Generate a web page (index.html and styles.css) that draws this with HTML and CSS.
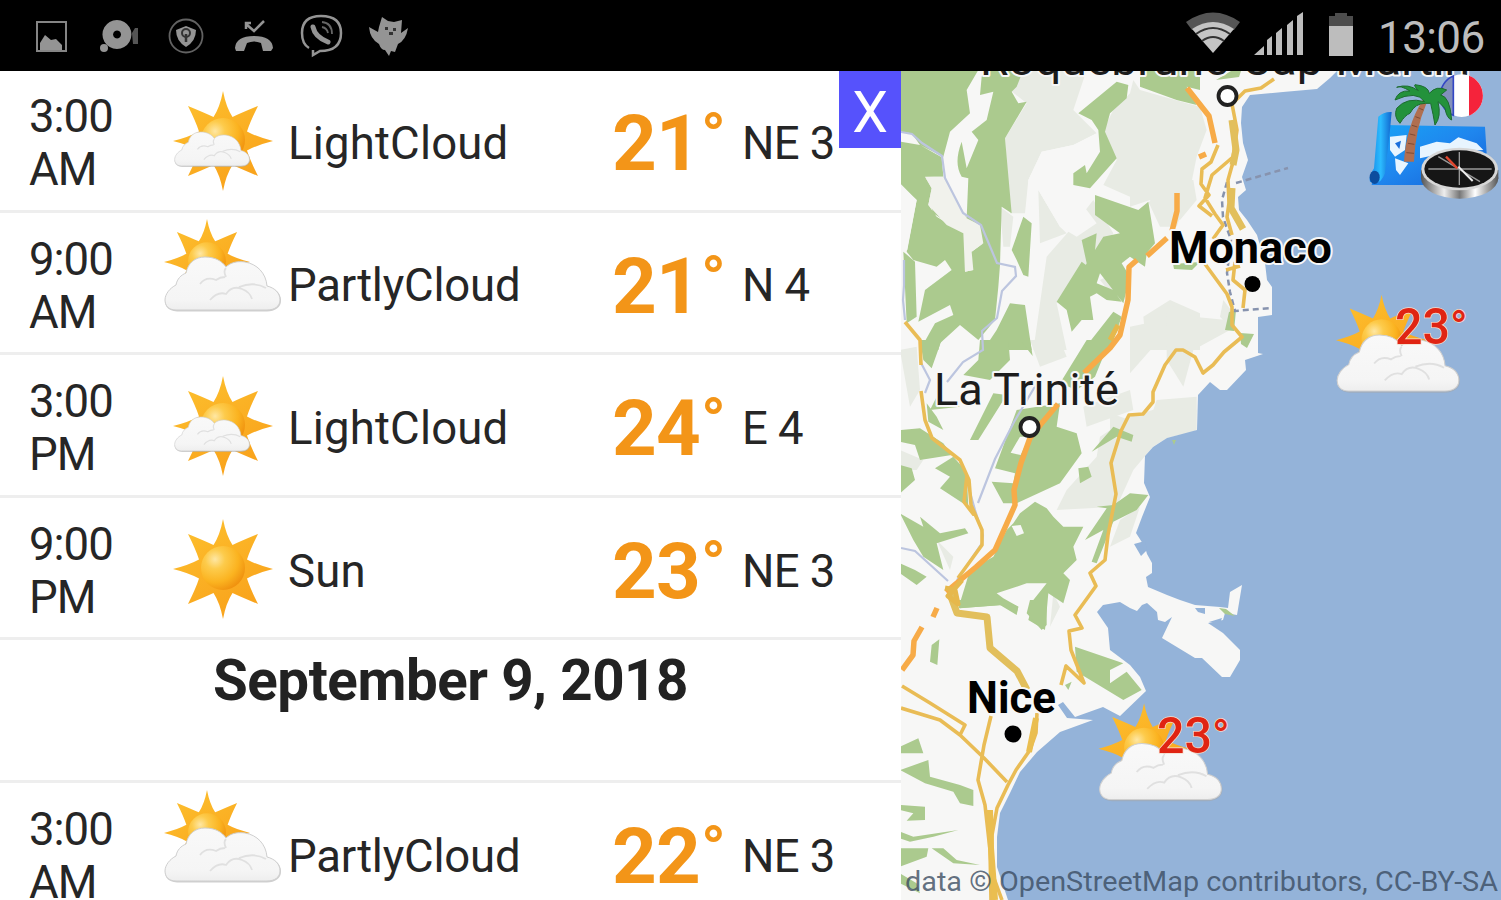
FILE: index.html
```html
<!DOCTYPE html>
<html lang="en">
<head>
<meta charset="utf-8">
<title>Weather map</title>
<link rel="stylesheet" href="styles.css">
</head>
<body>
<svg class="defs" aria-hidden="true">
  <defs>
    <linearGradient id="ray" x1="0" y1="0" x2="0.6" y2="1"><stop offset="0" stop-color="#fdc22f"/><stop offset="1" stop-color="#f9a21b"/></linearGradient>
    <radialGradient id="ball" cx="0.32" cy="0.3" r="0.75"><stop offset="0" stop-color="#fee7a4"/><stop offset="0.3" stop-color="#fdcb4b"/><stop offset="0.7" stop-color="#fbb320"/><stop offset="1" stop-color="#f0920f"/></radialGradient>
    <linearGradient id="puff" x1="0" y1="0" x2="0" y2="1"><stop offset="0" stop-color="#f9f9f9"/><stop offset="0.8" stop-color="#f5f5f5"/><stop offset="1" stop-color="#eee"/></linearGradient>
    <linearGradient id="sheet" x1="0" y1="0" x2="1" y2="1"><stop offset="0" stop-color="#18a4f6"/><stop offset="0.5" stop-color="#1f86ee"/><stop offset="1" stop-color="#1560d6"/></linearGradient>
    <linearGradient id="roll" x1="0" y1="0" x2="1" y2="0"><stop offset="0" stop-color="#1183e6"/><stop offset="0.5" stop-color="#2cbcff"/><stop offset="1" stop-color="#1065cf"/></linearGradient>
    <linearGradient id="steel" x1="0" y1="0" x2="1" y2="0"><stop offset="0" stop-color="#555"/><stop offset="0.3" stop-color="#eee"/><stop offset="0.5" stop-color="#777"/><stop offset="0.7" stop-color="#fff"/><stop offset="1" stop-color="#555"/></linearGradient>
    <g id="sun">
      <path fill="url(#ray)" d="M0-50Q3-34 9.500-24Q18-28 35-35Q27-19 24-9.500Q34-4 50 0Q34 4 24 9.500Q27 19 35 35Q18 28 9.500 24Q3 34 0 50Q-3 34-9.500 24Q-18 28-35 35Q-27 19-24 9.500Q-34 4-50 0Q-34-4-24-9.500Q-27-19-35-35Q-18-28-9.500-24Q-3-34 0-50Z"/>
      <circle cx="0" cy="-1" r="22" fill="url(#ball)"/>
    </g>
    <g id="cloud">
      <path fill="#a8a8a8" opacity=".55" d="M13 54.500C4 54 1 49 1 44L20 18L60 12L100 20L103 30C112 31 117.500 37 117 44C117 50 111 54.500 103 54.500Z"/>
      <path fill="url(#puff)" stroke="#cfcfcf" stroke-width="1" d="M12 53C4 53 1 48 1 43C1 37 6 31 12 28C13 22 17 18 22 16C24 6 31 0 41 0C51 0 58 4 62 10C67 5 74 4 81 5C93 7 102 16 103 29C111 31 116 36 116 43C116 49 111 53 103 53Z"/>
      <path fill="none" stroke="#e0e0e0" stroke-width="1.800" d="M36 27Q42 19 52 23Q56 20 61 20M46 43Q54 34 62 37Q68 28 78 32Q86 35 88 42M75 30Q90 24 102 31M62 11Q59 14 62 20"/>
    </g>
    <symbol id="w-sun" viewBox="0 0 120 110"><use href="#sun" x="60" y="55"/></symbol>
    <symbol id="w-light" viewBox="0 0 120 110"><use href="#sun" x="60" y="55"/><use href="#cloud" transform="translate(11 46) scale(.65 .64)"/></symbol>
    <symbol id="w-partly" viewBox="0 0 120 96">
      <use href="#sun" transform="translate(44 44) scale(.86)"/><use href="#cloud" x="1" y="39"/>
    </symbol>
  </defs>
</svg>

<div class="screen">
  <header class="status">
    <svg class="notices" viewBox="0 0 450 71" fill="#949494">
      <path fill="none" stroke="#858585" stroke-width="2" d="M37 22H66V51H37Z"/><path d="M40 43L45 35L51 40L56 39L62 45V50H40Z"/>
      <path fill-rule="evenodd" d="M117 20a14.500 14.500 0 1 1-.1 0ZM117 30.500a4 4 0 1 0 .1 0Z"/><circle cx="104" cy="48" r="4"/><path fill="#555" d="M132 33L135 28H138V44H133Z"/>
      <circle cx="186" cy="36" r="16.500" fill="none" stroke="#626262" stroke-width="1.800"/><path d="M186 26L196 30Q196 41 186 47Q176 41 176 30Z"/><circle cx="186" cy="33" r="4" fill="none" stroke="#333" stroke-width="2"/><path stroke="#333" stroke-width="2.500" d="M186 34V42"/>
      <path d="M235 48Q236 36 254 36Q272 36 273 48L271 51H263L261 43Q254 40 247 43L244 51H236Z"/><path fill="none" stroke="#949494" stroke-width="2.500" d="M246 24L254 31L264 21M246 29V23H251"/>
      <path fill="none" stroke="#949494" stroke-width="2.500" d="M309 48Q302 44 302 33Q302 16 321 16Q341 16 341 33Q341 51 320 51L313 55V50"/><path fill="none" stroke="#949494" stroke-width="5" stroke-linecap="round" d="M313 27Q315 37 328 42"/><path fill="none" stroke="#666" stroke-width="1.800" d="M322 22Q332 23 332 34M322 27Q327 28 328 33"/>
      <path d="M369 27L378 32L379 27L382 17L388 21L394 22L402 20L401 33L408 28Q406 40 398 44L395 52L391 51L389 56L385 50Q381 50 379 44Q370 39 369 27Z"/><path fill="#333" d="M385 27h3v3h-3zM393 28h3v3h-3zM389 32h4v3h-4z"/>
    </svg>
    <div class="system">
      <svg class="radio" viewBox="0 0 180 71">
        <path fill="#555" d="M6 22Q33 3 60 22L54 30Q33 16 12 30Z"/>
        <path fill="#c4c4c4" d="M12 29Q33 15 54 29L33 53Z"/><path fill="none" stroke="#333" stroke-width="2" d="M16 34Q33 22 50 34M22 41Q33 33 44 41"/>
        <path fill="#bdbdbd" d="M74 55L84 46V55ZM87 40L92 36V55H87ZM96 33L102 28V55H96ZM107 25L113 20V55H107ZM117 16L123 12V55H117Z"/>
        <path fill="#4c4c4c" d="M149 16H155V13H167V16H173V27H149Z"/><path fill="#bdbdbd" d="M149 26H179V26H173V56H149Z"/>
      </svg>
      <span class="clock">13:06</span>
    </div>
  </header>

  <div class="body">
    <main class="forecast">
      <div class="list">
        <div class="row"><div class="time">3:00<br>AM</div><svg class="icon full"><use href="#w-light"/></svg><div class="name wide">LightCloud</div><div class="temp">21<span class="deg">°</span></div><div class="wind">NE 3</div></div>
        <div class="row"><div class="time">9:00<br>AM</div><svg class="icon part"><use href="#w-partly"/></svg><div class="name">PartlyCloud</div><div class="temp">21<span class="deg">°</span></div><div class="wind">N 4</div></div>
        <div class="row"><div class="time">3:00<br>PM</div><svg class="icon full"><use href="#w-light"/></svg><div class="name wide">LightCloud</div><div class="temp">24<span class="deg">°</span></div><div class="wind">E 4</div></div>
        <div class="row"><div class="time">9:00<br>PM</div><svg class="icon full"><use href="#w-sun"/></svg><div class="name wide">Sun</div><div class="temp">23<span class="deg">°</span></div><div class="wind">NE 3</div></div>
        <h2 class="day">September 9, 2018</h2>
        <div class="row"><div class="time">3:00<br>AM</div><svg class="icon part"><use href="#w-partly"/></svg><div class="name">PartlyCloud</div><div class="temp">22<span class="deg">°</span></div><div class="wind">NE 3</div></div>
      </div>
      <button class="close">X</button>
    </main>

    <svg class="map" viewBox="901 71 600 829">
      <rect x="901" y="71" width="600" height="829" fill="#f7f7f6"/>
      <!-- hills, north -->
      <g transform="translate(900 70) scale(.33333)" fill="#e8ebe4">
        <path d="M380 0H560L520 120L590 190L520 225L425 245L385 330L375 430L330 430L315 205L380 100L330 60ZM700 30L720 60L860 100L900 110L920 180L890 260L870 360L830 470L780 470L745 395L700 420L610 345L650 270L610 180L640 120L690 70ZM80 325L130 320L200 440L260 520L200 540L190 490L100 420ZM415 360L480 470L500 490L420 520ZM510 480L580 390L640 490L560 620L470 700L500 840H400L440 560ZM730 740L810 690L900 730V840H740ZM300 410L340 440L330 530L310 530ZM600 630L640 610L670 640L640 680Z"/>
        <path fill="#f7f7f6" d="M425 245L520 225L590 190L600 240L560 310L520 310V345L570 355L545 400L590 460L530 500L480 470L415 360L390 420L385 330ZM610 345L700 385L780 350L745 400L700 425L600 385Z"/>
      </g>
      <!-- hills, coast -->
      <g transform="translate(1130 180) scale(.33333)" fill="#e8ebe4">
        <path d="M110 370L190 410L290 420L300 450L190 510L160 620L110 540ZM0 0H190L200 60L150 120L60 60L0 80ZM80 660L200 650V750L110 775L20 830L-60 840V700L0 720L60 720ZM0 440L50 430L70 500L0 580ZM280 360L310 400L300 440L270 410Z"/>
      </g>
      <g transform="translate(900 340) scale(.33333)" fill="#e8ebe4">
        <path d="M690 230L790 200L890 210L885 275L780 295L700 390L650 500L470 510L500 450L590 350L600 290ZM660 540L720 500L690 590L630 620ZM0 330L70 360L50 390H0ZM110 600L160 650L150 690ZM390 0H480L500 50L420 80ZM550 200L690 150L700 210L560 260ZM0 30L50 20L60 150L30 200ZM460 760L480 800L450 860Z"/>
      </g>
      <!-- woods, north -->
      <g transform="translate(900 70) scale(.33333)" fill="#abca8e">
        <path d="M0 0H235L200 60L210 130L150 185L130 260L60 225L35 190L0 185ZM245 20L255 0H370L350 50L335 65L355 100L380 95L315 205L335 430L305 410L300 585L275 570L240 510L215 540L225 600H195L190 490L100 430L90 400L100 350L75 320L130 322L200 445L205 325L185 320Q160 280 185 215L200 295L235 210L215 185L260 150L280 65L240 75ZM0 215L60 225L125 262L130 320L75 320L95 355L85 405L110 440L190 490L195 605L220 600L215 545L250 520L300 585L295 650L285 750L235 810L180 765L120 820L115 840H60L105 760L160 735L150 705L55 755L75 660L155 600L135 570L110 590L40 570L20 545L50 390L0 340ZM10 545L45 575L50 740L20 760ZM370 440L395 460L385 620L370 615L350 570L335 540ZM330 700L375 705L395 840H250L290 780ZM535 130L650 35L685 45L680 85L630 130L615 185L650 265L570 355L520 345V310L555 285L560 310L600 245L595 180L575 150ZM720 0H900V60L860 50L890 105L830 90L720 50ZM585 375L715 420L745 395L765 520L740 550L735 590L690 560L665 580L690 620L670 700L600 610L590 640L640 660L665 695L620 690L590 670L570 680L580 750L545 750L515 785L500 720L470 695L545 575L565 590L550 650L525 650L560 580L545 510L590 490L585 540L610 500L660 490L585 435ZM640 725L665 740L630 840H550Z"/>
        <path fill="#f1f2ec" d="M75 320H130L200 445L240 465L250 520L215 545L220 600L195 605L190 490L140 465L85 405L95 355Z"/>
        <path fill="#f7f7f6" d="M0 345L50 390L22 540L0 540Z"/>
      </g>
      <!-- woods, middle and west -->
      <g transform="translate(900 340) scale(.33333)" fill="#abca8e">
        <path d="M60 0H125L95 85L70 60ZM240 0H325L330 60L270 120L190 105L235 60ZM360 0H390L398 48ZM560 0H630L585 110L530 150L480 130ZM280 160L320 165L235 300L210 300ZM350 210L480 190L470 260L530 280L545 340L480 430L350 490L310 490L275 425L340 430L345 400L285 385ZM80 190L110 230L130 270L85 245ZM110 170L180 200L90 210ZM0 270L60 265L130 310L155 345L60 360L45 315L0 305ZM0 375L35 385L45 420L0 460ZM105 385L160 350L200 395L205 500L120 445L150 410ZM575 335L640 260L700 285L695 305L650 290ZM535 385L565 380L575 410L540 430ZM555 600L620 505L590 500L640 495L690 460L745 465L710 510L640 545L590 670L575 665L610 570ZM340 550L360 520L405 485L440 505L460 530L490 560L550 560L520 620L530 660L490 700L510 720L490 790L445 760L435 870L385 840L400 780L440 730L380 730L290 760L310 775L355 800L350 820L310 795L175 805L210 690L280 650L320 570ZM0 520L70 560L60 530L120 580L195 565L205 580L110 610L130 690L70 650L40 600ZM0 670L45 690L80 710L50 735L0 700Z"/>
        <path fill="#f7f7f6" d="M360 290L388 290L362 345L332 338ZM335 558L362 555L372 580L350 588Z"/>
      </g>
      <g transform="translate(900 600) scale(.33333)" fill="#abca8e">
        <path d="M175 0H310L355 20L350 45L300 15L180 25ZM390 0H440V75L425 90L380 40ZM95 135L118 118L112 195L90 185ZM525 140L670 190L630 210V250L530 215ZM630 250L680 215L725 270L670 300L530 215ZM0 440L55 415L70 460L0 460ZM0 510L85 480L90 530L180 555L220 570V618L180 610L160 575L75 550ZM0 615L75 620V660L20 662L40 640L0 630ZM0 695L40 710L175 690L100 710L30 725L0 715ZM0 745L85 745L80 770L0 800ZM95 745L130 745L170 780L240 795L160 790ZM0 820L50 850L60 880L0 850ZM495 255l20-10-10 25z"/>
      </g>
      <!-- sea -->
      <path fill="#94b3d9" d="M1337 71L1330 78L1317 89L1283 92L1250 95L1242 107L1241 123L1243 143L1248 160L1242 177L1246 190L1238 197L1239 210L1247 220L1257 235L1265 263L1267 280L1272 287V315L1258 317V353L1263 354L1245 360L1246 370L1227 390H1220L1210 382L1198 395L1197 430L1167 438L1153 447L1145 456L1144 483L1150 497L1142 517L1136 533L1145 547L1147 554L1152 563V573L1146 577L1148 587L1167 595L1180 600L1195 605L1220 607L1228 608L1230 592L1242 585L1237 615L1225 613L1223 620L1208 623L1223 633L1240 650V660L1230 677H1222L1202 658H1195L1162 638L1172 617L1165 622L1158 620L1157 612L1147 603L1142 605L1137 611L1130 608L1120 602L1103 605L1097 612L1108 628L1110 650L1130 665L1140 677L1146 691L1120 716L1103 707L1075 717L1063 702L1058 705L1067 718L1093 720L1060 732L1037 752L1020 772L1010 793L1000 813L997 837V867L1008 900H1501V71Z"/>
      <path fill="#94b3d9" d="M1134 544L1145 541L1147 550L1141 556ZM1195 608L1205 608V614L1198 612ZM1209 622L1222 618L1220 623Z"/>
      <path fill="#abca8e" d="M1219 608L1226 609L1235 616L1225 614ZM1172 440l4 0-2 5zM1229 312L1236 310L1234 331L1225 330ZM1240 333L1254 334L1247 348L1241 344ZM1173 264L1200 262L1192 270L1174 269ZM1216 80L1231 71H1241L1239 77Z"/>
      <!-- rivers and rail -->
      <g fill="none" stroke="#bcc5df" stroke-width="2.200">
        <path d="M901 132L912 134L922 143L942 156L945 178L963 213L981 225L997 263L1015 267L1016 276L1002 291L997 318L982 331L983 350L963 362L947 382M904 260V285L903 300L905 320M920 361L930 380L925 393M1040 378L1014 422L995 459L978 503M901 548L915 551L948 581M957 580L982 543L983 535L975 510L968 485"/>
      </g>
      <g fill="none" stroke="#8793ae" stroke-width="2.500" stroke-dasharray="6 4">
        <path d="M1236 183L1288 168M1227 182L1222 200L1223 217L1231 240L1227 273L1230 292L1235 311L1271 308"/>
      </g>
      <!-- secondary roads -->
      <g fill="none" stroke="#e9bc55" stroke-width="3.600" stroke-linejoin="round">
        <path d="M1274 79L1261 88L1245 91L1232 104L1237 130L1233 157L1212 175L1205 198L1215 214L1223 225L1213 239M1218 145L1211 162L1202 169L1201 184L1209 195L1199 206L1212 216M1235 155L1228 180L1229 203L1227 217L1232 235M1205 264L1227 294L1232 307L1232 325L1242 337L1224 352L1213 365L1203 373L1195 357L1183 350H1176L1165 365L1153 392L1153 402L1143 414L1129 415L1121 431L1111 463L1116 494L1108 535L1105 560L1090 573L1096 586L1083 604L1075 615L1082 628L1069 631L1071 650L1084 683L1066 666L1061 685M905 322L920 340L921 365M921 391L925 420L932 438L960 460L969 480L971 505L982 530L982 545L958 578M967 475L964 502L974 515M1235 262L1233 280L1245 290L1243 308M1226 270L1240 266"/>
        <path d="M902 686L930 703L965 725L960 735L940 720L901 708M960 735L984 758L1007 782M991 716L984 745L978 780L985 805L990 850L991 900M1037 713L1036 733L1030 750L1016 770L1008 785L997 808L992 835L991 870L1002 900"/>
      </g>
      <g fill="none" stroke="#e2bf5c" stroke-width="7" stroke-linejoin="round"><path d="M950 594L957 613L987 617L990 648L1017 671L1027 690M1232 188L1231 208L1243 229M1232 120L1236 150L1233 165"/></g>
      <path fill="none" stroke="#eabe50" stroke-width="6" d="M990 810L991 848L995 900M1036 718L1029 752"/>
      <!-- motorways -->
      <g fill="none" stroke="#f7ab48" stroke-width="5.500" stroke-linejoin="round">
        <path d="M1187 88L1209 116L1215 143M1177 193L1177 211L1172 231M1167 238L1147 256M1137 260L1129 267L1128 300L1120 335L1110 348L1084 373M1058 404L1041 424L1030 438L1021 463L1014 490L1015 505L995 550L976 567L946 592M937 608L933 617M922 627L914 641L913 655L902 670M1199 157L1206 154"/>
        <path stroke="#e6b84c" stroke-width="5" d="M945 588L955 590L958 604L948 596L962 580M1118 325L1110 340"/>
      </g>
      <!-- places -->
      <g class="places">
        <text x="980" y="75" font-size="44" textLength="490" lengthAdjust="spacingAndGlyphs">Roquebrune-Cap-Martin</text>
        <text class="strong" x="1169" y="263" font-size="44" textLength="163" lengthAdjust="spacingAndGlyphs">Monaco</text>
        <text x="934" y="405" font-size="44.500" textLength="185" lengthAdjust="spacingAndGlyphs">La Trinité</text>
        <text class="strong" x="967" y="713" font-size="45" textLength="89" lengthAdjust="spacingAndGlyphs">Nice</text>
      </g>
      <circle cx="1252.500" cy="284" r="8"/><circle cx="1013" cy="734" r="8.500"/>
      <g fill="#fff" stroke="#222" stroke-width="3.800"><circle cx="1227.500" cy="96" r="9"/><circle cx="1029.500" cy="427" r="9"/></g>
      <!-- map weather -->
      <use href="#w-partly" x="1335" y="293.500" width="127" height="102"/>
      <use href="#w-partly" x="1097.500" y="702" width="127" height="102"/>
      <g class="heat"><text x="1395" y="344" font-size="50" textLength="55" lengthAdjust="spacingAndGlyphs">23</text><text x="1450" y="343" font-size="46">°</text><text x="1157" y="753" font-size="50" textLength="55" lengthAdjust="spacingAndGlyphs">23</text><text x="1212" y="752" font-size="46">°</text></g>
      <!-- travel badge -->
      <g transform="translate(1150 0) scale(.33333)">
        <path fill="url(#sheet)" d="M700 375L1005 380L1010 460L840 555H665L690 420Z"/>
        <path fill="#e8f5ff" d="M720 410L770 405L765 450L735 470L720 450ZM810 440L860 425L900 430L925 412L980 430L1000 450L900 455L810 475ZM735 475L775 490L750 525L738 510Z"/>
        <path fill="#1b6fdc" d="M735 430l18-8-5 25z"/>
        <path fill="url(#roll)" d="M685 350Q700 335 725 336L720 390L705 520Q690 560 660 545Q655 530 672 505Z"/>
        <ellipse cx="674" cy="532" rx="15" ry="20" fill="#0c4d9e"/>
        <circle cx="935" cy="287" r="64" fill="#fff"/><path fill="#8290bc" stroke="#3346c4" stroke-width="5" d="M910 228A64 64 0 0 0 910 346Z"/><path fill="#f5233b" d="M957 227A64 64 0 0 1 957 347Z"/>
        <path fill="#b06f50" d="M818 300L830 308Q795 390 792 485H762Q768 380 818 300Z"/><path fill="none" stroke="#7e4a33" stroke-width="3" d="M808 325L820 330M796 350L810 355M786 376L802 381M779 402L796 406M774 430L793 433M769 458L792 460"/>
        <path fill="#23923b" stroke="#1c6a2e" stroke-width="3" d="M824 305Q800 270 735 300Q745 270 780 273Q750 255 740 262Q775 250 805 272Q790 255 795 254Q835 258 838 280Q860 255 890 270L872 285Q900 290 905 360Q890 355 885 325Q870 310 864 305Q875 350 855 375Q850 345 842 310L826 310Q795 310 780 340Q765 345 750 370Q730 350 740 325Q770 290 824 305Z"/>
        <ellipse cx="929" cy="535" rx="116" ry="61" fill="url(#steel)"/><path fill="url(#steel)" d="M813 510V535H1045V510Z"/>
        <ellipse cx="929" cy="507" rx="115" ry="64" fill="#d7d7d7"/><ellipse cx="929" cy="507" rx="106" ry="56" fill="#161616"/>
        <path fill="none" stroke="#999" stroke-width="4" d="M928 456V555M835 507H1025M865 470L990 545"/><path stroke="#eee" stroke-width="6" d="M925 500L968 543"/><path stroke="#e0462e" stroke-width="7" d="M888 470L922 505"/>
      </g>
      <text class="credit" x="905" y="891" font-size="27" textLength="593" lengthAdjust="spacingAndGlyphs">data © OpenStreetMap contributors, CC-BY-SA</text>
    </svg>
  </div>
</div>
</body>
</html>
```
FILE: styles.css
```css
* { box-sizing: border-box; }

body {
  margin: 0;
  background: #fff;
  color: #262626;
  font-family: Roboto, "Liberation Sans", sans-serif;
}

.defs { position: absolute; width: 0; height: 0; }

.screen {
  display: flex;
  flex-direction: column;
  width: 1501px;
  height: 900px;
  overflow: hidden;
}

.status {
  display: flex;
  flex: none;
  justify-content: space-between;
  height: 71px;
  background: #000;
}

.notices { width: 450px; height: 71px; }
.system { display: flex; width: 321px; }
.radio { width: 180px; height: 71px; flex: none; }

.clock {
  padding: 5px 0 0 18px;
  color: #bdbdbd;
  font-size: 44px;
  line-height: 66px;
  letter-spacing: -0.6px;
}

.body { display: flex; flex: 1; min-height: 0; }

.forecast {
  position: relative;
  flex: none;
  width: 901px;
  overflow: hidden;
}

.list { margin-top: -1px; }

.row {
  display: grid;
  grid-template-columns: 134px 125px 325px 130px 1fr;
  align-items: center;
  height: 142.600px;
  padding: 7px 0 0 29px;
  border-bottom: 3px solid #eee;
  font-size: 45.500px;
  line-height: 53px;
}

.time { letter-spacing: -1px; }
.name { letter-spacing: -0.2px; }
.wide { letter-spacing: 0.2px; }
.wind { margin-left: -1px; letter-spacing: -0.6px; }

.icon { display: block; width: 120px; }
.full { height: 110px; margin-top: -5px; }
.part { height: 96px; margin-top: -39px; }

.temp {
  display: flex;
  align-items: flex-start;
  margin: 2px 0 0 -1px;
  color: #f39518;
  font-size: 78px;
  font-weight: 700;
  line-height: 84px;
  letter-spacing: -0.8px;
}

.deg {
  margin-left: 1px;
  font-size: 64px;
  line-height: 71px;
}

.day {
  height: 142.600px;
  margin: 0;
  padding-top: 8px;
  border-bottom: 3px solid #eee;
  color: #222;
  font-size: 56.500px;
  font-weight: 700;
  line-height: 66px;
  letter-spacing: -0.45px;
  text-align: center;
}

.close {
  position: absolute;
  top: 0;
  right: 0;
  width: 62px;
  height: 77px;
  padding: 2px 0 0;
  border: 0;
  background: #5652fc;
  color: #fff;
  font: 400 57px/80px Roboto, sans-serif;
}

.map { display: block; flex: none; width: 600px; height: 829px; }
.map text { font-family: Roboto, "Liberation Sans", sans-serif; }

.places text {
  fill: #1c1c1c;
  stroke: #f7f7f7;
  stroke-width: 4px;
  stroke-linejoin: round;
  paint-order: stroke;
}

.places .strong { fill: #000; font-weight: 700; }

.heat text {
  fill: #e02413;
  font-weight: 500;
  stroke: #f6dccb;
  stroke-width: 1.500px;
  paint-order: stroke;
}

.credit { fill: #3a4b60; fill-opacity: 0.8; }
```
